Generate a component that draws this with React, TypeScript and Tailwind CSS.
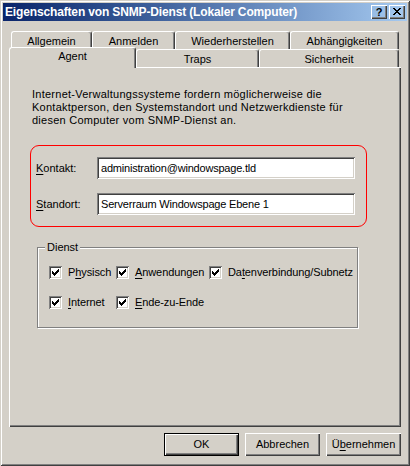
import React from "react";

// ─── Constants ─────────────────────────────────────────────────────────────────

const BACK_TABS = [
  { label: "Allgemein", w: "w-[81px]" },
  { label: "Anmelden", w: "w-[83px]" },
  { label: "Wiederherstellen", w: "w-[115px]" },
  { label: "Abhängigkeiten", w: "w-[109px]" },
];

const RAISED =
  "shadow-[inset_1px_1px_0_#fff,inset_-1px_-1px_0_#404040,inset_-2px_-2px_0_#808080]";
const SUNKEN =
  "shadow-[inset_1px_1px_0_#808080,inset_-1px_-1px_0_#fff,inset_2px_2px_0_#404040,inset_-2px_-2px_0_#d4d0c8]";

// ─── Small pieces ──────────────────────────────────────────────────────────────

function Tab({ label, className = "" }: { label: string; className?: string }) {
  return (
    <div
      className={`flex items-center justify-center rounded-t-[3px] border-l border-t border-white border-r border-r-[#404040] shadow-[inset_-1px_0_0_#808080] bg-[#d4d0c8] ${className}`}
    >
      {label}
    </div>
  );
}

function Check() {
  return (
    <span className={`flex h-[13px] w-[13px] shrink-0 items-center justify-center bg-white ${SUNKEN}`}>
      <svg width="7" height="7" viewBox="0 0 7 7" shapeRendering="crispEdges">
        <rect x="0" y="2" width="1" height="3" fill="#000" />
        <rect x="1" y="3" width="1" height="3" fill="#000" />
        <rect x="2" y="4" width="1" height="3" fill="#000" />
        <rect x="3" y="3" width="1" height="3" fill="#000" />
        <rect x="4" y="2" width="1" height="3" fill="#000" />
        <rect x="5" y="1" width="1" height="3" fill="#000" />
        <rect x="6" y="0" width="1" height="3" fill="#000" />
      </svg>
    </span>
  );
}

function CheckItem({ pre, u, post }: { pre: string; u: string; post: string }) {
  return (
    <div className="flex items-center gap-[6px]">
      <Check />
      <span className="tracking-[-0.1px]">
        {pre}
        <span className="underline underline-offset-[2px]">{u}</span>
        {post}
      </span>
    </div>
  );
}

function Field({ u, rest, value }: { u: string; rest: string; value: string }) {
  return (
    <div className="flex items-center">
      <span className="w-[61px]">
        <span className="underline underline-offset-[2px]">{u}</span>
        {rest}
      </span>
      <div className={`flex h-[22px] w-[258px] items-center bg-white px-[4px] tracking-[-0.2px] ${SUNKEN}`}>
        {value}
      </div>
    </div>
  );
}

function Button({ children, isDefault = false }: { children: React.ReactNode; isDefault?: boolean }) {
  return (
    <div
      className={`flex h-[23px] w-[75px] items-center justify-center ${
        isDefault
          ? "shadow-[inset_0_0_0_1px_#000,inset_2px_2px_0_#fff,inset_-2px_-2px_0_#404040,inset_-3px_-3px_0_#808080]"
          : RAISED
      }`}
    >
      {children}
    </div>
  );
}

// ─── Page ──────────────────────────────────────────────────────────────────────

export default function App() {
  return (
    <div
      className="flex h-[466px] w-[410px] flex-col bg-[#d4d0c8] p-[3px] font-['Liberation_Sans',Arial,sans-serif] text-[11px] leading-[13px] text-black shadow-[inset_1px_1px_0_#d4d0c8,inset_-1px_-1px_0_#404040,inset_2px_2px_0_#fff,inset_-2px_-2px_0_#808080]"
    >
      {/* Title bar */}
      <div className="flex h-[18px] items-center justify-between bg-gradient-to-r from-[#0a246a] to-[#a6caf0] pl-[2px] pr-[2px]">
        <span className="text-[12px] font-bold tracking-[-0.15px] text-white">
          Eigenschaften von SNMP-Dienst (Lokaler Computer)
        </span>
        <div className="flex gap-[2px]">
          <div className={`flex h-[14px] w-[16px] items-center justify-center text-[11px] font-bold leading-none ${RAISED}`}>
            ?
          </div>
          <div className={`flex h-[14px] w-[16px] items-center justify-center ${RAISED}`}>
            <svg width="8" height="7" viewBox="0 0 8 7" shapeRendering="crispEdges" className="-mt-[1px]">
              <path d="M0 0h2v1h-2zM6 0h2v1h-2zM1 1h2v1h-2zM5 1h2v1h-2zM2 2h4v1h-4zM3 3h2v1h-2zM2 4h4v1h-4zM1 5h2v1h-2zM5 5h2v1h-2zM0 6h2v1h-2zM6 6h2v1h-2z" fill="#000" />
            </svg>
          </div>
        </div>
      </div>

      {/* Tabs */}
      <div className="ml-[6px] mt-[10px] flex w-[392px] flex-col">
        <div className="ml-[2px] flex h-[18px]">
          {BACK_TABS.map(t => (
            <Tab key={t.label} label={t.label} className={`${t.w} pt-[2px]`} />
          ))}
        </div>
        <div className="relative z-10 flex h-[18px] items-end">
          <Tab label="Agent" className="relative top-[1px] h-[21px] w-[127px] pb-[4px]" />
          <Tab label="Traps" className="h-[18px] w-[123px] pt-[2px]" />
          <Tab label="Sicherheit" className="h-[18px] w-[140px] pt-[2px]" />
        </div>

        {/* Panel */}
        <div className={`flex h-[360px] flex-col pl-[21px] ${RAISED}`}>
          <p className="ml-[2px] mt-[21px] tracking-[0.25px]">
            Internet-Verwaltungssysteme fordern möglicherweise die
            <br />
            Kontaktperson, den Systemstandort und Netzwerkdienste für
            <br />
            diesen Computer vom SNMP-Dienst an.
          </p>

          <div className="mt-[18px] flex h-[82px] w-[337px] flex-col gap-[14px] rounded-[9px] border border-[#ff0000] pl-[5px] pt-[11px]">
            <Field u="K" rest="ontakt:" value="administration@windowspage.tld" />
            <Field u="S" rest="tandort:" value="Serverraum Windowspage Ebene 1" />
          </div>

          <div className="relative ml-[7px] mt-[20px] h-[81px] w-[321px] border border-[#808080] shadow-[inset_1px_1px_0_#fff,1px_1px_0_#fff]">
            <span className="absolute -top-[7px] left-[7px] bg-[#d4d0c8] px-[2px]">Dienst</span>
            <div className="ml-[11px] mt-[18px] grid grid-cols-[67px_93px_auto] gap-y-[17px]">
              <CheckItem pre="P" u="h" post="ysisch" />
              <CheckItem pre="" u="A" post="nwendungen" />
              <CheckItem pre="Da" u="t" post="enverbindung/Subnetz" />
              <CheckItem pre="" u="I" post="nternet" />
              <CheckItem pre="" u="E" post="nde-zu-Ende" />
            </div>
          </div>
        </div>
      </div>

      {/* Buttons */}
      <div className="mr-[6px] mt-[6px] flex justify-end gap-[6px]">
        <Button isDefault>OK</Button>
        <Button>Abbrechen</Button>
        <Button>
          <span>
            Ü<span className="underline underline-offset-[2px]">b</span>ernehmen
          </span>
        </Button>
      </div>
    </div>
  );
}
